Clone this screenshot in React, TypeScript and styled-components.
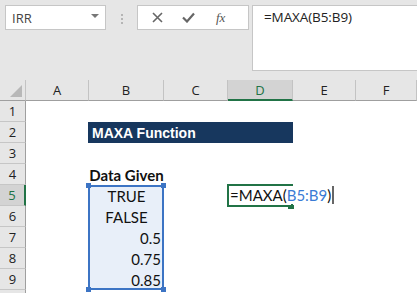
import React from "react";
import styled, { createGlobalStyle, css } from "styled-components";

const GlobalStyle = createGlobalStyle`
	html, body {
		margin: 0;
		padding: 0;
		background: #e6e6e6;
	}
	body {
		width: 417px;
		height: 293px;
		overflow: hidden;
		font-family: "Open Sans", "Noto Sans", sans-serif;
	}
`;

// --- FORMULA BAR ---------------------------------------------------------------------------------
const Toolbar = styled.div`
	display: flex;
	flex-direction: row;
	align-items: flex-start;
	height: 80px;
	padding: 5px 0 0 5px;
	box-sizing: border-box;
	background: #e6e6e6;
`;
const NameBox = styled.div`
	display: flex;
	align-items: center;
	justify-content: space-between;
	width: 101px;
	height: 25px;
	box-sizing: border-box;
	padding: 0 6px 0 6px;
	background: #fff;
	border: 1px solid #c6c6c6;
	font-size: 13px;
	color: #444;
`;
const Caret = styled.span`
	width: 0;
	height: 0;
	border-left: 4px solid transparent;
	border-right: 4px solid transparent;
	border-top: 4px solid #777;
	margin-bottom: 3px;
`;
const Grip = styled.div`
	display: flex;
	flex-direction: column;
	gap: 2px;
	margin: 9px 14px 0 15px;
	span {
		width: 2px;
		height: 2px;
		background: #b5b5b5;
	}
`;
const ButtonGroup = styled.div`
	display: flex;
	align-items: center;
	width: 112px;
	height: 25px;
	box-sizing: border-box;
	background: #fff;
	border: 1px solid #c6c6c6;
	padding-left: 14px;
	gap: 19px;
`;
const FxLabel = styled.span`
	font-family: "Liberation Serif", serif;
	font-style: italic;
	font-size: 13px;
	color: #555;
	margin-left: 2px;
`;
const FormulaInput = styled.div`
	flex: 1;
	height: 66px;
	margin-left: 3px;
	box-sizing: border-box;
	background: #fff;
	border: 1px solid #c6c6c6;
	border-right: none;
	padding: 2px 0 0 11px;
	font-size: 13.5px;
	color: #222;
	letter-spacing: -0.1px;
`;

// --- SHEET ---------------------------------------------------------------------------------
const Sheet = styled.div`
	display: grid;
	grid-template-columns: 26px 63px 75px 64px 65px 63px 1fr;
	grid-template-rows: 21px;
	grid-auto-rows: 21px;
	background: #fff;
`;
const ColHead = styled.div<{ active?: boolean }>`
	display: flex;
	align-items: center;
	justify-content: center;
	background: #e6e6e6;
	border-right: 1px solid #c3c3c3;
	border-bottom: 1px solid #9f9f9f;
	font-size: 13px;
	color: #222;
	${(props) =>
		props.active &&
		css`
			background: #d3d3d3;
			color: #217346;
			border-bottom: 2px solid #217346;
		`}
`;
const Corner = styled(ColHead)`
	position: relative;
	&::after {
		content: "";
		position: absolute;
		right: 3px;
		bottom: 3px;
		width: 0;
		height: 0;
		border-left: 12px solid transparent;
		border-bottom: 12px solid #b8b8b8;
	}
`;
const RowHead = styled.div<{ active?: boolean }>`
	display: flex;
	align-items: center;
	justify-content: center;
	grid-column: 1;
	background: #e6e6e6;
	border-right: 1px solid #9f9f9f;
	border-bottom: 1px solid #c6c6c6;
	font-size: 13px;
	color: #222;
	${(props) =>
		props.active &&
		css`
			background: #d3d3d3;
			color: #217346;
			border-right: 2px solid #217346;
		`}
`;
const Title = styled.div`
	grid-column: 3 / 6;
	grid-row: 3;
	display: flex;
	align-items: center;
	margin-left: -1px;
	padding-left: 4px;
	background: #17375e;
	color: #fff;
	font-family: "Liberation Sans", Arial, sans-serif;
	font-weight: bold;
	font-size: 14px;
`;
const Cell = styled.div<{ row: number; align?: "center" | "right"; bold?: boolean }>`
	grid-column: 3;
	grid-row: ${(props) => props.row};
	display: flex;
	align-items: flex-end;
	justify-content: ${(props) => (props.align === "right" ? "flex-end" : "center")};
	padding: 0 3px 1px 3px;
	font-family: Lato, "Open Sans", sans-serif;
	font-size: 15px;
	font-weight: ${(props) => (props.bold ? 700 : 400)};
	color: #111;
	z-index: 1;
`;
const HeaderCell = styled(Cell)`
	padding: 0 0 1px 0;
	justify-content: center;
	white-space: nowrap;
`;
const Selection = styled.div`
	grid-column: 3;
	grid-row: 6 / 11;
	position: relative;
	margin-left: -1px;
	background: #e8eff9;
	border: 2px solid #3c74c4;
`;
const Handle = styled.span<{ top?: boolean; left?: boolean }>`
	position: absolute;
	width: 5px;
	height: 5px;
	background: #3c74c4;
	${(props) => (props.top ? "top: -4px;" : "bottom: -4px;")}
	${(props) => (props.left ? "left: -4px;" : "right: -4px;")}
`;
const EditCell = styled.div`
	grid-column: 5;
	grid-row: 6;
	position: relative;
	margin: -1px 0 -1px -1px;
	border: 2px solid #217346;
	display: flex;
	align-items: flex-end;
	padding: 0 0 0 1px;
	white-space: nowrap;
	overflow: visible;
	font-family: Lato, "Open Sans", sans-serif;
	font-size: 15px;
	color: #111;
	z-index: 2;
	&::after {
		content: "";
		position: absolute;
		right: -3px;
		bottom: -4px;
		width: 6px;
		height: 4px;
		background: #217346;
	}
`;
const EditText = styled.span`
	position: relative;
	z-index: 3;
	background: #fff;
	padding-right: 1px;
	margin-bottom: 1px;
	border-right: 2px solid #666;
	line-height: 18px;
`;
const RefText = styled.span`
	color: #3a7bd5;
`;

const columns = ["A", "B", "C", "D", "E", "F"];

export default function App() {
	// row 10 only peeks in at the bottom edge, so it gets no label
	const rows = [1, 2, 3, 4, 5, 6, 7, 8, 9, 10];
	const data: [number, string, "center" | "right"][] = [
		[6, "TRUE", "center"],
		[7, "FALSE", "center"],
		[8, "0.5", "right"],
		[9, "0.75", "right"],
		[10, "0.85", "right"],
	];

	return (
		<>
			<GlobalStyle />
			<Toolbar>
				<NameBox>
					<span>IRR</span>
					<Caret />
				</NameBox>
				<Grip>
					<span />
					<span />
					<span />
				</Grip>
				<ButtonGroup>
					<svg width="11" height="11" viewBox="0 0 11 11">
						<path d="M1 1 L10 10 M10 1 L1 10" stroke="#666" strokeWidth="1.6" />
					</svg>
					<svg width="13" height="11" viewBox="0 0 13 11">
						<path d="M1 5.5 L5 9.5 L12 1.5" stroke="#666" strokeWidth="2.2" fill="none" />
					</svg>
					<FxLabel>fx</FxLabel>
				</ButtonGroup>
				<FormulaInput>=MAXA(B5:B9)</FormulaInput>
			</Toolbar>
			<Sheet>
				<Corner />
				{columns.map((c) => (
					<ColHead key={c} active={c === "D"}>
						{c}
					</ColHead>
				))}
				{rows.map((r) => (
					<RowHead key={r} active={r === 5} style={{ gridRow: r + 1 }}>
						{r < 10 ? r : null}
					</RowHead>
				))}
				<Title>MAXA Function</Title>
				<HeaderCell row={5} bold>
					Data Given
				</HeaderCell>
				<Selection>
					<Handle top left />
					<Handle top />
					<Handle left />
					<Handle />
				</Selection>
				{data.map(([row, text, align]) => (
					<Cell key={row} row={row} align={align}>
						{text}
					</Cell>
				))}
				<EditCell>
					<EditText>
						=MAXA(<RefText>B5:B9</RefText>)
					</EditText>
				</EditCell>
			</Sheet>
		</>
	);
}
